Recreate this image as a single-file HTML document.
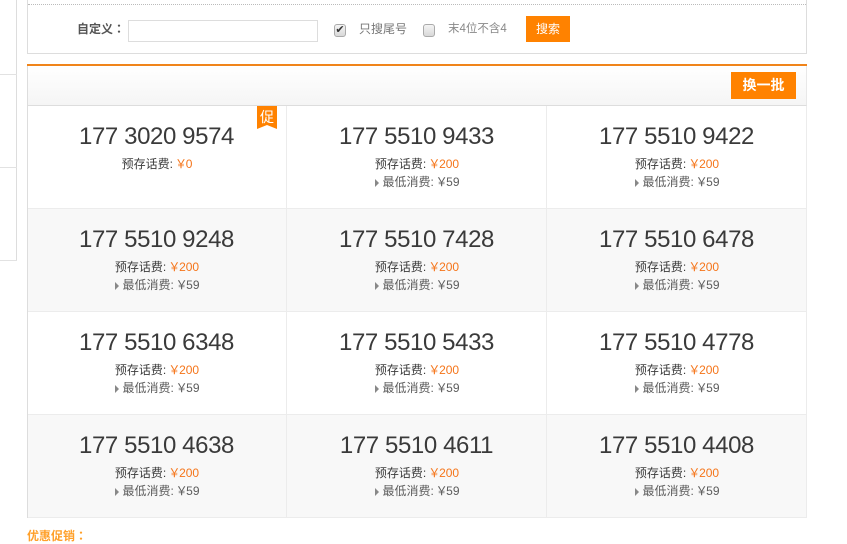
<!DOCTYPE html>
<html><head><meta charset="utf-8">
<style>
*{box-sizing:border-box}
html,body{margin:0;padding:0;background:#fff}
body{width:847px;height:544px;position:relative;overflow:hidden;font-family:"Liberation Sans","Noto Sans CJK SC",sans-serif;font-size:12px;color:#444}
.a{position:absolute}
.cell{position:absolute;width:260px;height:103px;border-right:1px solid #ececec;border-bottom:1px solid #ececec;text-align:center}
.g{background:#f8f8f8}
.n{position:absolute;left:0;width:259px;top:16px;line-height:30px;font-size:24px;letter-spacing:-.4px;color:#3a3a3a;white-space:nowrap}
.p{position:absolute;left:0;width:259px;top:49px;padding-left:1px;line-height:18px;font-size:12px;color:#3c3c3c;white-space:nowrap}
.p b{font-weight:normal;color:#f5751a}
.y{margin:0 -1.5px}
.p .y{margin:0 -1.25px}
.m{position:absolute;left:0;width:259px;top:67px;padding-left:2px;line-height:18px;font-size:12px;color:#5c5c5c;white-space:nowrap}
.m i{display:inline-block;width:0;height:0;border-left:4px solid #888;border-top:4px solid transparent;border-bottom:4px solid transparent;margin-right:3px;vertical-align:-1px}
.c{font-family:"Noto Sans CJK TC",sans-serif}
</style></head><body>
<div class="a" style="left:0;top:0;width:17px;height:261px;border-right:1px solid #ddd"></div>
<div class="a" style="left:0;top:74px;width:17px;height:1px;background:#e2e2e2"></div>
<div class="a" style="left:0;top:167px;width:17px;height:1px;background:#e2e2e2"></div>
<div class="a" style="left:0;top:260px;width:17px;height:1px;background:#e2e2e2"></div>

<div class="a" style="left:27px;top:0;width:780px;height:54px;border:1px solid #ddd;border-top:0"></div>
<div class="a" style="left:28px;top:4px;width:778px;height:1px;border-top:1px dotted #bbb"></div>
<div class="a" style="left:77px;top:21px;line-height:16px;font-size:12px;font-weight:bold;color:#555;white-space:nowrap">自定义<span class="c">：</span></div>
<div class="a" style="left:128px;top:20px;width:190px;height:22px;border:1px solid #ddd;background:#fff"></div>
<div class="a" style="left:334px;top:24px;width:12px;height:13px;border:1px solid #aaa;border-radius:3px;background:linear-gradient(#f4f4f4,#d8d8d8);font-size:11px;line-height:11px;text-align:center;color:#333">✔</div>
<div class="a" style="left:359px;top:21px;line-height:16px;color:#777;white-space:nowrap">只搜尾号</div>
<div class="a" style="left:423px;top:24px;width:12px;height:13px;border:1px solid #aaa;border-radius:3px;background:linear-gradient(#f4f4f4,#d8d8d8)"></div>
<div class="a" style="left:448px;top:21px;line-height:16px;color:#888;white-space:nowrap;font-size:11.5px">末4位不含4</div>
<div class="a" style="left:526px;top:16px;width:44px;height:26px;background:#ff8200;color:#fff;text-align:center;line-height:26px">搜索</div>

<div class="a" style="left:27px;top:64px;width:780px;height:2px;background:#f0841a"></div>
<div class="a" style="left:27px;top:66px;width:780px;height:40px;background:linear-gradient(#fff,#f5f5f5);border-bottom:1px solid #ddd;border-left:1px solid #ddd;border-right:1px solid #e8e8e8"></div>
<div class="a" style="left:731px;top:72px;width:65px;height:27px;background:#ff8200;color:#fff;text-align:center;line-height:27px;font-size:14px;font-weight:bold">换一批</div>

<div class="cell" style="left:27px;top:106px"><div class="n">177 3020 9574</div><div class="p">预存话费: <b><span class="y">￥</span>0</b></div></div>
<div class="cell" style="left:287px;top:106px"><div class="n">177 5510 9433</div><div class="p">预存话费: <b><span class="y">￥</span>200</b></div><div class="m"><i></i>最低消费: <span class="y">￥</span>59</div></div>
<div class="cell" style="left:547px;top:106px"><div class="n">177 5510 9422</div><div class="p">预存话费: <b><span class="y">￥</span>200</b></div><div class="m"><i></i>最低消费: <span class="y">￥</span>59</div></div>

<div class="cell g" style="left:27px;top:209px"><div class="n">177 5510 9248</div><div class="p">预存话费: <b><span class="y">￥</span>200</b></div><div class="m"><i></i>最低消费: <span class="y">￥</span>59</div></div>
<div class="cell g" style="left:287px;top:209px"><div class="n">177 5510 7428</div><div class="p">预存话费: <b><span class="y">￥</span>200</b></div><div class="m"><i></i>最低消费: <span class="y">￥</span>59</div></div>
<div class="cell g" style="left:547px;top:209px"><div class="n">177 5510 6478</div><div class="p">预存话费: <b><span class="y">￥</span>200</b></div><div class="m"><i></i>最低消费: <span class="y">￥</span>59</div></div>

<div class="cell" style="left:27px;top:312px"><div class="n">177 5510 6348</div><div class="p">预存话费: <b><span class="y">￥</span>200</b></div><div class="m"><i></i>最低消费: <span class="y">￥</span>59</div></div>
<div class="cell" style="left:287px;top:312px"><div class="n">177 5510 5433</div><div class="p">预存话费: <b><span class="y">￥</span>200</b></div><div class="m"><i></i>最低消费: <span class="y">￥</span>59</div></div>
<div class="cell" style="left:547px;top:312px"><div class="n">177 5510 4778</div><div class="p">预存话费: <b><span class="y">￥</span>200</b></div><div class="m"><i></i>最低消费: <span class="y">￥</span>59</div></div>

<div class="cell g" style="left:27px;top:415px"><div class="n">177 5510 4638</div><div class="p">预存话费: <b><span class="y">￥</span>200</b></div><div class="m"><i></i>最低消费: <span class="y">￥</span>59</div></div>
<div class="cell g" style="left:287px;top:415px"><div class="n">177 5510 4611</div><div class="p">预存话费: <b><span class="y">￥</span>200</b></div><div class="m"><i></i>最低消费: <span class="y">￥</span>59</div></div>
<div class="cell g" style="left:547px;top:415px"><div class="n">177 5510 4408</div><div class="p">预存话费: <b><span class="y">￥</span>200</b></div><div class="m"><i></i>最低消费: <span class="y">￥</span>59</div></div>

<div class="a" style="left:27px;top:106px;width:1px;height:412px;background:#ddd"></div>

<svg class="a" style="left:257px;top:106px" width="20" height="23"><polygon points="0,0 20,0 20,23 10,19 0,23" fill="#ff8200"/></svg>
<div class="a" style="left:257px;top:108px;width:20px;text-align:center;line-height:18px;font-size:14px;color:#fff">促</div>

<div class="a" style="left:27px;top:528px;line-height:16px;font-size:12px;font-weight:bold;color:#ffa02a;white-space:nowrap">优惠促销<span class="c">：</span></div>
</body></html>
